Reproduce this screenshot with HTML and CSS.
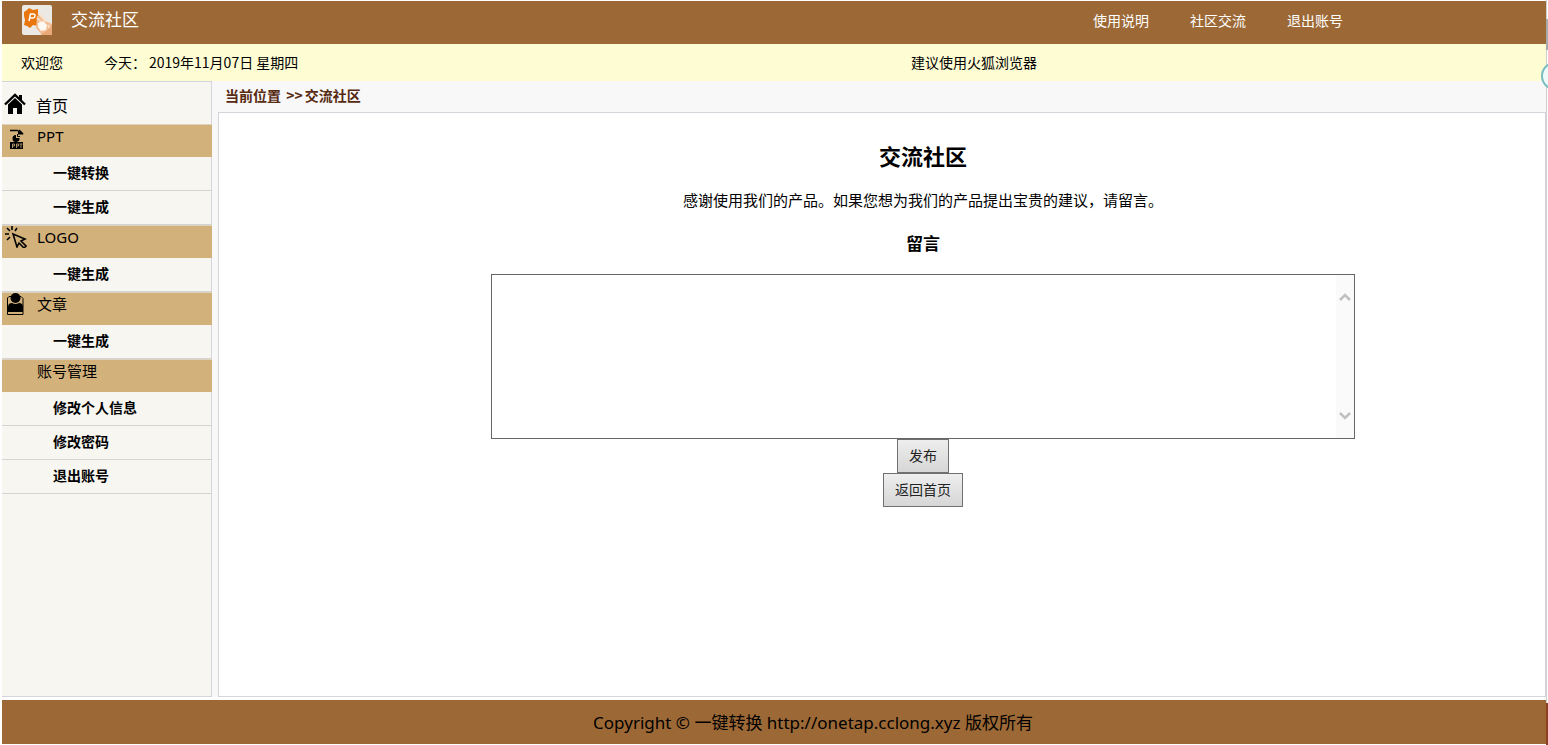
FILE: index.html
```html
<!DOCTYPE html>
<html lang="zh-CN">
<head>
<meta charset="utf-8">
<title>交流社区</title>
<link rel="stylesheet" href="styles.css">
</head>
<body>
<div class="page">
  <header class="header">
    <svg class="logo" viewBox="0 0 30 30" aria-hidden="true">
      <rect width="30" height="30" rx="2" fill="#ece9e5"/>
      <path d="M2 7l3-2 2-2 4 2 5-1v6l3 3-3 3 0 5-5-1-3 3-3-2-3-1 1-5-1-4z" fill="#e8760c"/>
      <path d="M7 16l1.500-7h2.500q2.500 0 2 2.200T10.500 13H8.500" fill="none" stroke="#fff" stroke-width="1.500"/>
      <path d="M15 11l4-1 5 6 6 3v11H20l-6-7z" fill="#f3bd93"/>
      <path d="M16 18l5-2 4 4-1 5-5 1-3-4z" fill="#fdf8f2"/>
      <path d="M17 9l7 8M15 13l4 4M26 20l3 6" stroke="#fbe3cc" stroke-width="1.500"/>
      <path d="M19 29l6-3 5-6v10H20z" fill="#e9a878"/>
    </svg>
    <span class="brand">交流社区</span>
    <nav class="topnav">
      <a href="#">使用说明</a>
      <a href="#">社区交流</a>
      <a href="#">退出账号</a>
    </nav>
  </header>
  <div class="notice">
    <span class="welcome">欢迎您</span>
    <span class="today">今天：</span>
    <span>2019年11月07日 星期四</span>
    <span class="tip">建议使用火狐浏览器</span>
  </div>
  <div class="body">
    <aside class="sidebar">
      <a class="home" href="#">
        <svg class="icon" viewBox="0 0 22 22" aria-hidden="true">
          <path d="M1 12.500L11 3l10 9.500" fill="none" stroke="#000" stroke-width="2.400"/>
          <path d="M15 3h3v6l-3-3zM4 12.500L11 6l7 6.500V22h-5v-6H9v6H4z"/>
        </svg>
        <span>首页</span>
      </a>
      <div class="group">
        <svg class="icon" viewBox="0 0 22 22" aria-hidden="true">
          <path d="M5 3.500h8M14 3l4 4" fill="none" stroke="#000" stroke-width="1.500"/>
          <path d="M13 3l5.500 4.500H13z"/>
          <path d="M11 8v3h3.500a3.500 3.500 0 1 1-3.500-3z"/>
          <path d="M12.500 7v2.500H15" fill="none" stroke="#000"/>
          <rect x="5" y="15" width="13" height="7"/>
          <path d="M7.500 21v-4h2v2h-2M11.500 21v-4h2v2h-2M14.500 17h3M16 17v4" fill="none" stroke="#d2b17b" stroke-width=".8"/>
        </svg>
        <span>PPT</span>
      </div>
      <a class="item" href="#">一键转换</a>
      <a class="item" href="#">一键生成</a>
      <div class="group">
        <svg class="icon raised" viewBox="0 0 22 22" aria-hidden="true">
          <path d="M8 8l12 5-4 2 5 5-2 2-5-5-2 4z" fill="none" stroke="#000" stroke-width="1.600"/>
          <path d="M7 0v4M2 2l3 3M0 8h4M2 14l3-3M12 2l-2 3" stroke="#000" stroke-width="1.600"/>
        </svg>
        <span>LOGO</span>
      </div>
      <a class="item" href="#">一键生成</a>
      <div class="group">
        <svg class="icon raised" viewBox="0 0 22 22" aria-hidden="true">
          <path d="M4 3.500h12l2 2v16H2.500V5z" fill="none" stroke="#000"/>
          <circle cx="10.500" cy="5" r="5"/>
          <path d="M3 14q0-4 4-4 3.500 2 7 0 4 0 4 4v5H3z"/>
        </svg>
        <span>文章</span>
      </div>
      <a class="item" href="#">一键生成</a>
      <div class="group"><span class="icon"></span><span>账号管理</span></div>
      <a class="item" href="#">修改个人信息</a>
      <a class="item" href="#">修改密码</a>
      <a class="item" href="#">退出账号</a>
    </aside>
    <main class="main">
      <div class="crumb">当前位置 <span class="sep">&gt;&gt;</span>交流社区</div>
      <form class="content">
        <h1>交流社区</h1>
        <p>感谢使用我们的产品。如果您想为我们的产品提出宝贵的建议，请留言。</p>
        <h2><label for="message">留言</label></h2>
        <div class="box">
          <textarea id="message"></textarea>
          <div class="rail">
            <svg viewBox="0 0 12 8" aria-hidden="true"><path d="M1 7l5-5 5 5" fill="none" stroke="#c0c0c0" stroke-width="2.500"/></svg>
            <svg viewBox="0 0 12 8" aria-hidden="true"><path d="M1 1l5 5 5-5" fill="none" stroke="#c0c0c0" stroke-width="2.500"/></svg>
          </div>
        </div>
        <button type="button">发布</button>
        <button type="button">返回首页</button>
      </form>
    </main>
  </div>
  <footer class="footer">Copyright © 一键转换 http://onetap.cclong.xyz 版权所有</footer>
  <div class="edge">
    <span class="thumb"></span>
    <span class="ring"></span>
    <span class="corner"></span>
  </div>
</div>
</body>
</html>
```
FILE: styles.css
```css
* { box-sizing: border-box; }
body {
  margin: 0;
  background: #fff;
  color: #000;
  font: 14px/20px "Noto Sans CJK SC", sans-serif;
}
a { color: inherit; text-decoration: none; }
.page {
  position: relative;
  display: flex;
  flex-direction: column;
  min-height: 100vh;
  padding: 1px 2px;
  overflow: hidden;
}
.header {
  display: flex;
  align-items: flex-start;
  height: 43px;
  padding: 4px 203px 0 20px;
  background: #9c6936;
  color: #fff;
  line-height: 28px;
}
.logo { width: 30px; height: 30px; }
.brand { margin-left: 19px; font-size: 17px; }
.topnav { display: flex; gap: 41px; margin-left: auto; line-height: 30px; }
.notice {
  height: 37px;
  display: flex;
  padding-left: 19px;
  background: #fefcd3;
  line-height: 36px;
}
.welcome { width: 83px; }
.today { width: 45px; }
.tip { margin-left: auto; padding-right: 509px; }
.body { display: flex; flex: 1; gap: 6px; background: #f8f8f8; }
.sidebar {
  width: 210px;
  border: 1px solid #d3d5da;
  border-left: 0;
  background: #f8f6f0;
}
.home, .group { display: flex; }
.home { height: 42px; padding: 10px 2px; gap: 10px; font-size: 16px; line-height: 26px; }
.icon { width: 22px; height: 22px; flex: none; }
.raised { margin-top: -2px; }
.group {
  height: 33px;
  padding: 2px 3px;
  gap: 10px;
  margin-right: -1px;
  border-top: 1px solid #ddd2bc;
  background: #d2b17b;
  font: 15px/18px "Noto Sans", "Noto Sans CJK SC", sans-serif;
}
.item {
  display: block;
  height: 34px;
  padding-left: 51px;
  border-bottom: 1px solid #d4d4d4;
  font-weight: bold;
  line-height: 30px;
}
.main { display: flex; flex: 1; flex-direction: column; }
.crumb {
  height: 31px;
  padding-left: 7px;
  color: #572a12;
  font-weight: bold;
  line-height: 28px;
}
.sep { padding: 0 2px; }
.content {
  display: flex;
  flex: 1;
  flex-direction: column;
  align-items: center;
  padding: 26px 0 0 82px;
  border: 1px solid #d3d5da;
  background: #fff;
}
h1, h2, p { margin: 0; }
h1 { font-size: 22px; line-height: 32px; }
p { margin-top: 17px; font-size: 15px; line-height: 24px; }
h2 { margin: 18px 0; font-size: 17px; line-height: 26px; }
.box { position: relative; width: 69.4%; }
textarea {
  display: block;
  width: 100%;
  height: 165px;
  padding: 4px 22px 4px 4px;
  border: 1px solid #666;
  outline: 0;
  resize: none;
  overflow: hidden;
  font: inherit;
}
.rail {
  position: absolute;
  top: 1px;
  right: 1px;
  bottom: 1px;
  display: flex;
  flex-direction: column;
  align-items: center;
  justify-content: space-between;
  width: 18px;
  padding: 18px 0;
  background: #fafafa;
}
.rail svg { width: 12px; height: 8px; }
button {
  height: 34px;
  padding: 0 11px 2px;
  border: 1px solid #707070;
  border-radius: 0;
  background: linear-gradient(#eee, #d6d6d6);
  color: #222;
  font: inherit;
}
.footer {
  height: 44px;
  margin-top: 3px;
  padding-left: 78px;
  background: #9c6936;
  font: 17px/46px "Noto Sans", "Noto Sans CJK SC", sans-serif;
  text-align: center;
}
.edge {
  position: absolute;
  top: 0;
  right: 0;
  bottom: 0;
  width: 2px;
  border-left: 1px solid #d0d0d0;
}
.thumb {
  position: absolute;
  top: 19px;
  right: 0;
  width: 2px;
  height: 31px;
  background: #a7aaa8;
}
.ring {
  position: absolute;
  top: 62px;
  left: -6px;
  width: 28px;
  height: 28px;
  border: 2px solid #79bdc0;
  border-radius: 50%;
  background: #effafa;
}
.corner {
  position: absolute;
  right: 0;
  bottom: 0;
  width: 2px;
  height: 42px;
  background: #8d3f1e;
}
```
